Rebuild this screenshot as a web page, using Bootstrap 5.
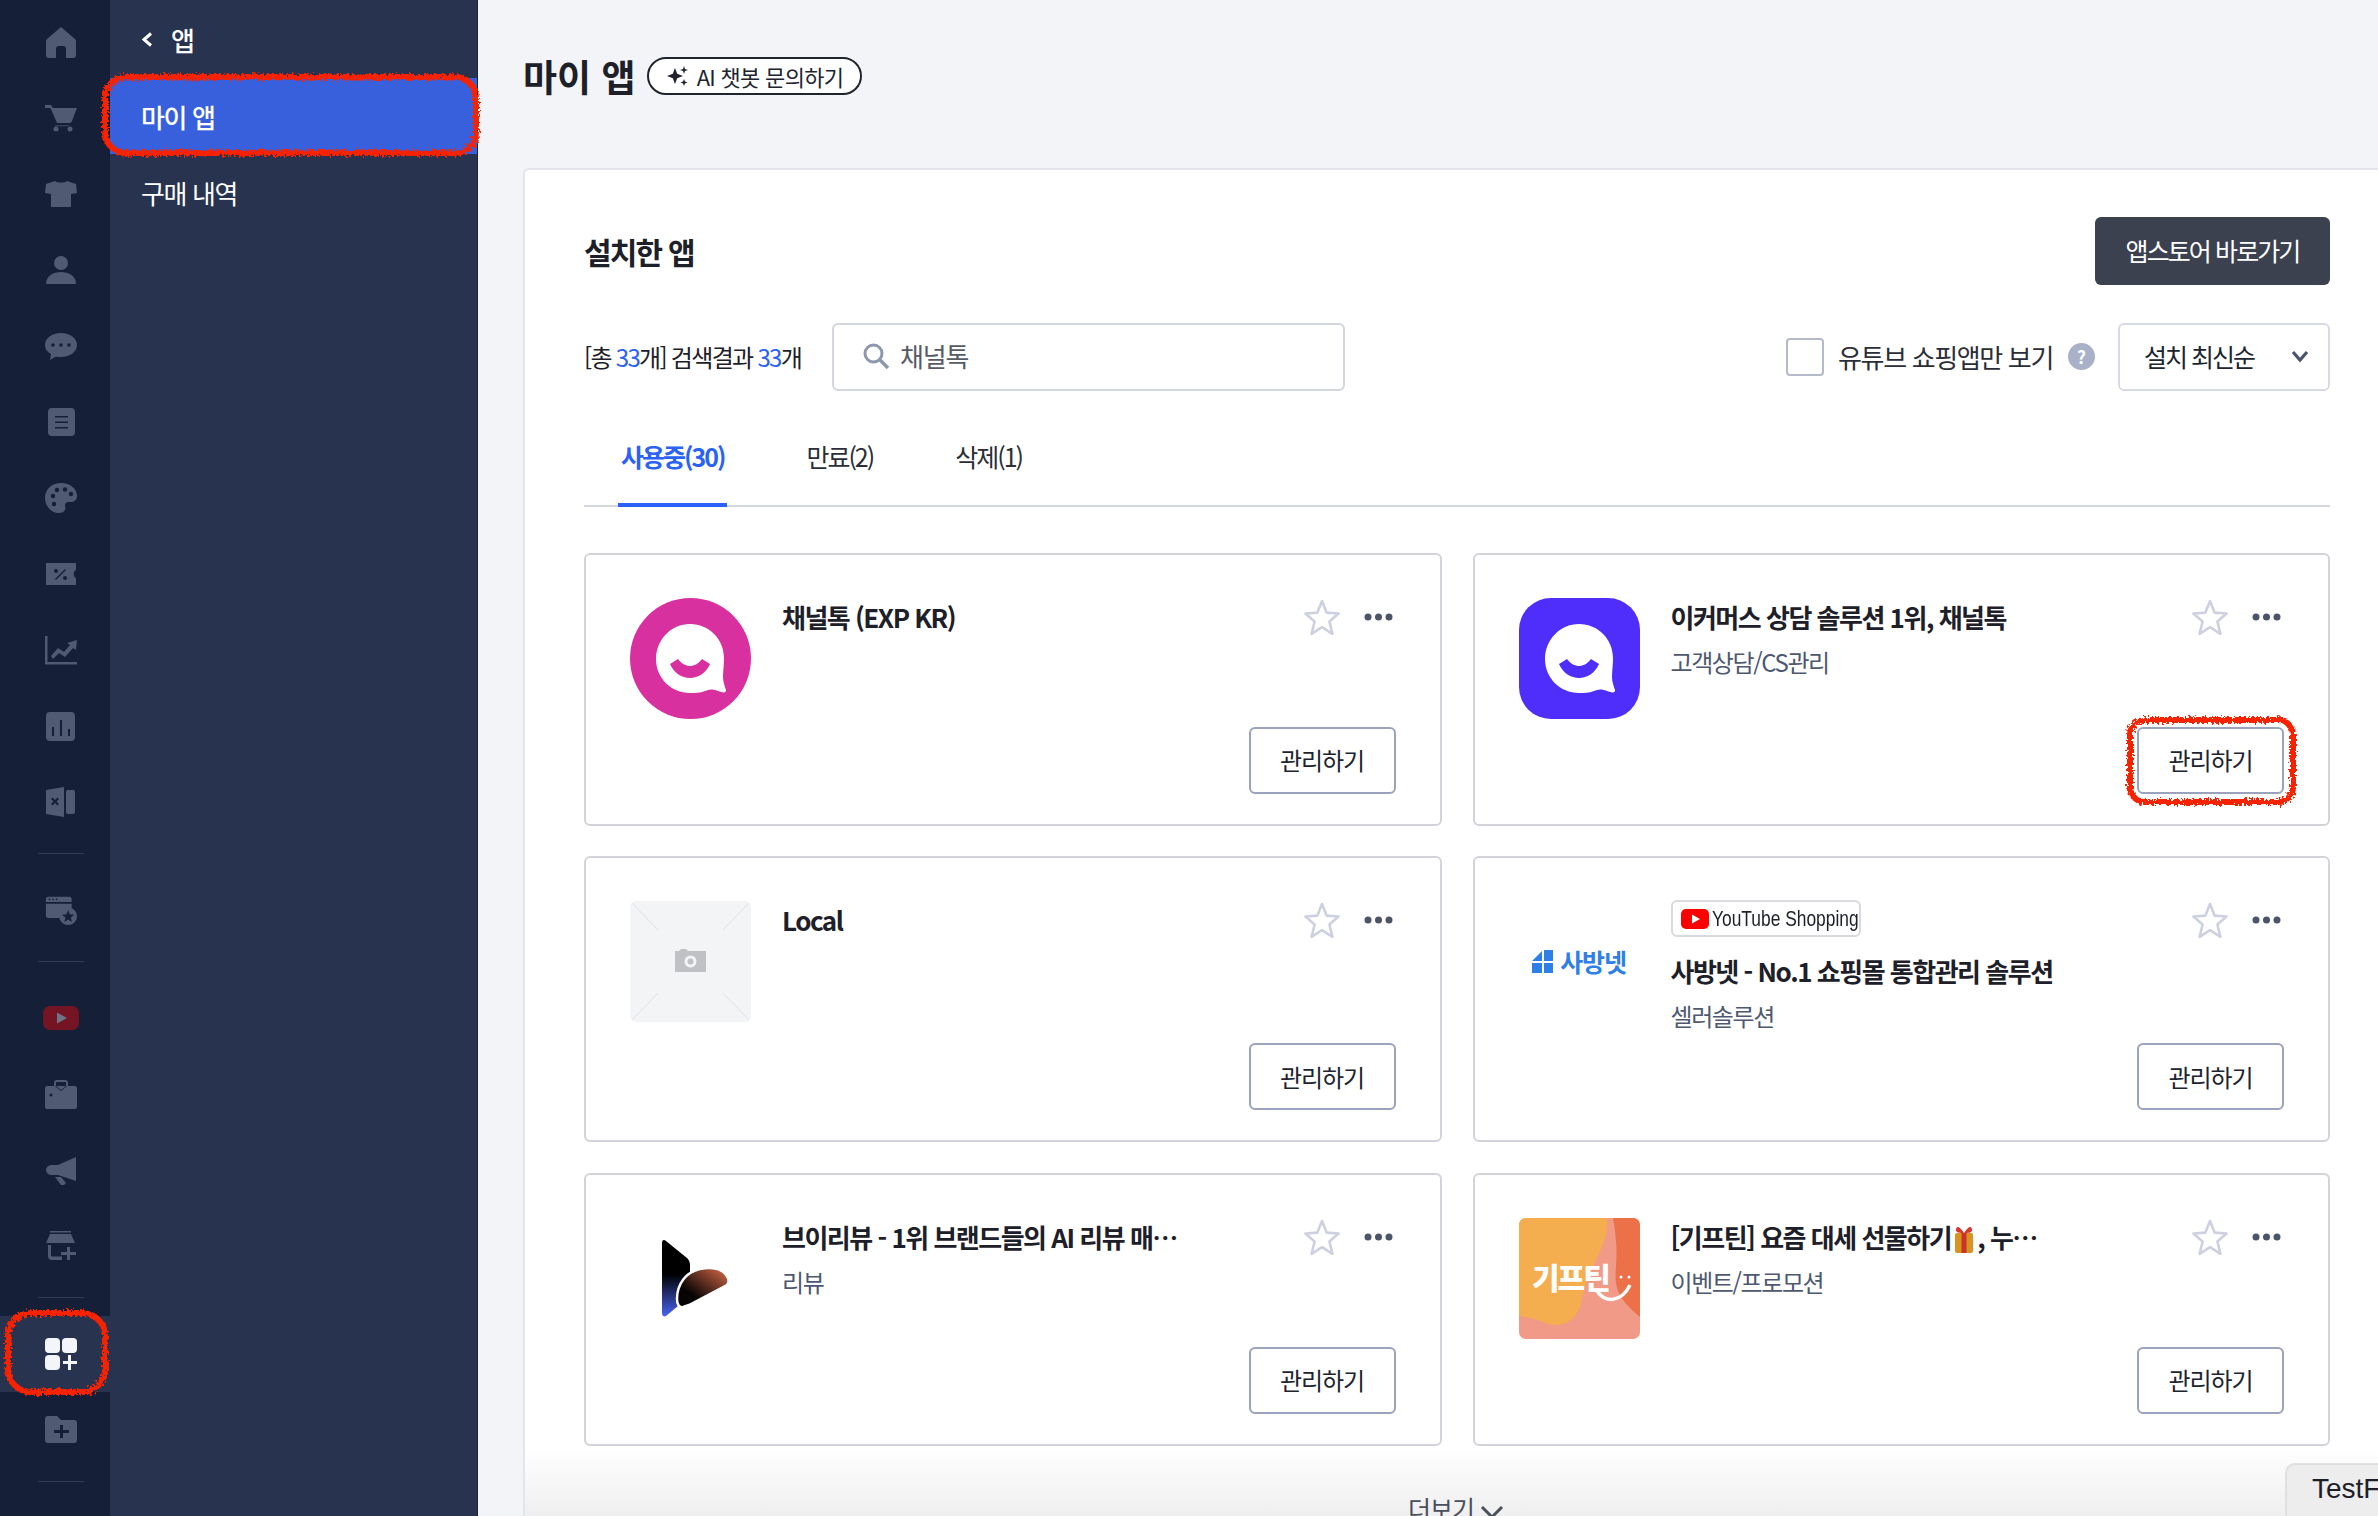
<!DOCTYPE html>
<html lang="ko">
<head>
    <meta charset="UTF-8">
    <meta name="viewport" content="width=device-width, initial-scale=1.0">
    <title>마이 앱</title>
    <link href="https://cdn.jsdelivr.net/npm/bootstrap@5.3.0/dist/css/bootstrap.min.css" rel="stylesheet">
    <style>
        html, body { height: 100%; }
        body { overflow: hidden; background: #f2f4f8; color: #1d2028; font-family: "Noto Sans CJK KR", "Noto Sans", sans-serif; }
        .page-wrap { height: 1516px; position: relative; overflow: hidden; }

        /* icon rail */
        .rail { width: 110px; flex: none; background: #161f38; padding-top: 4px; }
        .rail-item { height: 76px; display: flex; align-items: center; justify-content: center; padding-left: 11px; }
        .rail-item svg { width: 32px; height: 32px; fill: #505a72; }
        .rail-item.on { background: #283350; }
        .rail-item.on svg { fill: #f4f5f8; }
        .rail-sep { width: 46px; height: 1px; background: #323c57; margin: 13px auto 18px 38px; }

        /* sub menu */
        .subnav { width: 368px; flex: none; background: #283350; border-right: 1px solid #1a2440; }
        .subnav-head { height: 78px; padding: 0 0 0 31px; color: #fff; font-size: 26px; font-weight: 500; display: flex; align-items: center; gap: 18px; }
        .subnav-link { display: flex; align-items: center; height: 76px; padding-left: 31px; color: #fff; font-size: 26px; letter-spacing: -1.4px; text-decoration: none; }
        .subnav-link.on { background: #385fdc; font-weight: 500; }

        /* main */
        .main-area { flex: 1; min-width: 0; padding-left: 45px; }
        .page-head { height: 168px; padding-top: 54px; display: flex; align-items: flex-start; gap: 12px; }
        .page-title { font-size: 37px; font-weight: 700; line-height: 44px; margin: 0; }
        .ai-pill { height: 38px; width: 215px; margin-top: 3px; border: 2px solid #20242f; border-radius: 19px; background: #fff; display: flex; align-items: center; justify-content: center; gap: 8px; font-size: 22px; letter-spacing: -.7px; color: #20242f; }
        .ai-pill svg { width: 22px; height: 22px; fill: #20242f; }
        .panel { background: #fff; border: 2px solid #e3e5ea; border-right: 0; border-bottom: 0; border-radius: 6px 0 0 0; padding: 47px 48px 0 59px; height: 1400px; overflow: hidden; }
        .panel-title { font-size: 30px; font-weight: 700; letter-spacing: -1.8px; margin: 0; }
        .store-btn { width: 235px; height: 68px; background: #3c4150; border: 0; border-radius: 6px; color: #fff; font-size: 25px; letter-spacing: -1.9px; }
        .filter-row { margin-top: 38px; height: 68px; }
        .count-txt { font-size: 24px; letter-spacing: -1.7px; width: 248px; flex: none; }
        .count-txt b { font-weight: 400; color: #2a62f5; }
        .search-box { width: 513px; height: 68px; border: 2px solid #d3d6df; border-radius: 6px; display: flex; align-items: center; padding-left: 28px; gap: 10px; font-size: 26px; line-height: 34px; padding-bottom: 2px; letter-spacing: -1.2px; color: #565b66; }
        .search-box svg { width: 28px; height: 28px; }
        .yt-only { font-size: 26px; letter-spacing: -1.35px; color: #2b2e37; padding-bottom: 2px; }
        .yt-check.form-check-input { width: 38px; height: 38px; margin: 0 14px 0 0; border: 2px solid #b4bac9; border-radius: 4px; }
        .help-dot { width: 27px; height: 27px; border-radius: 50%; background: #a9b1c9; color: #fff; font-size: 18px; font-weight: 700; line-height: 27px; text-align: center; margin: 0 23px 2px 15px; }
        .sort-select.form-select { width: 212px; height: 68px; border: 2px solid #d8dbe3; border-radius: 6px; padding: 0 0 0 24px; font-size: 25px; letter-spacing: -2px; color: #20242f; background-image: url("data:image/svg+xml,%3csvg xmlns='http://www.w3.org/2000/svg' viewBox='0 0 20 16'%3e%3cpath fill='none' stroke='%234b5468' stroke-width='3.2' d='M3 3l7 8 7-8'/%3e%3c/svg%3e"); background-position: right 18px center; background-size: 20px 16px; }
        .tab-bar { margin-top: 45px; border-bottom: 2px solid #d4d7e0; padding-left: 34px; gap: 76px; }
        .tab-link { display: block; position: relative; padding: 0 3px 29px; line-height: 40px; font-size: 25px; letter-spacing: -2px; color: #2b2e37; text-decoration: none; }
        .tab-link.on { color: #2a62f5; font-weight: 700; }
        .tab-link.on::after { content: ""; position: absolute; left: 0; right: 0; bottom: -2px; height: 4px; background: #2a62f5; }

        /* app cards */
        .app-grid { --bs-gutter-x: 31px; --bs-gutter-y: 30.5px; margin-top: 15px; }
        .app-card { display: flex; flex-direction: column; border: 2px solid #d2d4d9; border-radius: 6px; padding: 29px 29px 30px 44px; background: #fff; height: 100%; }
        .app-top { display: flex; gap: 31px; min-height: 121px; padding-top: 14px; box-sizing: content-box; }
        .app-logo { width: 121px; height: 121px; flex: none; display: block; }
        .app-text { flex: 1; min-width: 0; margin: -1px 0 1px; }
        .app-name { font-size: 26px; font-weight: 700; line-height: 40px; letter-spacing: -1.5px; margin: 0; white-space: nowrap; }
        .app-cate { font-size: 24px; line-height: 37px; letter-spacing: -1.4px; color: #4e5871; margin: 6px 0 0; }
        .app-tools { flex: none; display: flex; align-items: center; align-self: flex-start; height: 38px; gap: 24px; padding-right: 18px; }
        .app-tools .star-ic { width: 36px; height: 38px; }
        .app-tools .dots-ic { width: 29px; height: 8px; }
        .app-foot { margin-top: auto; padding-top: 8px; text-align: right; }
        .manage-btn { width: 147px; height: 67px; border: 2px solid #9aa3bb; border-radius: 6px; background: #fff; font-size: 24px; letter-spacing: -1.1px; color: #20242f; padding: 0; margin-right: 15px; }
        .yt-tag { display: inline-flex; align-items: center; gap: 3px; height: 37px; width: 190px; border: 2px solid #d8dade; border-radius: 6px; padding-left: 8px; margin-bottom: 14px; font: 500 22px/1 "Liberation Sans", sans-serif; color: #1d2028; white-space: nowrap; vertical-align: top; }
        .yt-tag svg { flex: none; }
        .yt-tag span { display: inline-block; transform: scaleX(.79); transform-origin: left center; }
        .sabang-logo { display: flex; align-items: center; justify-content: center; gap: 6px; height: 121px; width: 121px; flex: none; color: #2f7fe8; font-size: 25px; font-weight: 700; letter-spacing: -1.2px; }
        .gift-ic { width: 26px; height: 30px; vertical-align: -5px; }

        .more-strip { margin: 0 -48px 0 -59px; height: 300px; padding: 44px 0 0 9px; text-align: center; font-size: 25px; letter-spacing: -1px; color: #4a4f5b; background: linear-gradient(#fff, #efefef 70px); }
        .more-strip svg { width: 24px; height: 15px; margin-left: 6px; vertical-align: -1px; }

        /* hand drawn marks on top of the shot */
        .scribble { position: absolute; border: 6px solid #f62200; filter: url(#rough); pointer-events: none; }
        .scribble-menu { left: 102px; top: 74px; width: 377px; height: 82px; border-radius: 24px; }
        .scribble-rail { left: 5px; top: 1310px; width: 103px; height: 85px; border-radius: 26px; }
        .scribble-btn { left: 2127px; top: 717px; width: 169px; height: 88px; border-radius: 18px; }
        .flight-tab { position: absolute; left: 2285px; top: 1463px; width: 100px; height: 60px; background: #ededed; border: 2px solid #e0e0e0; border-radius: 10px 0 0 0; padding: 8px 0 0 25px; font: 28px "Liberation Sans", sans-serif; color: #1d2028; overflow: hidden; white-space: nowrap; }
    </style>
</head>
<body>
    <svg width="0" height="0" class="position-absolute">
        <defs>
            <filter id="rough" x="-5%" y="-5%" width="110%" height="110%">
                <feTurbulence type="fractalNoise" baseFrequency="0.4" numOctaves="2" seed="4"/>
                <feDisplacementMap in="SourceGraphic" scale="8"/>
            </filter>
            <linearGradient id="vrStem" x1="0" y1="0" x2="0" y2="1">
                <stop offset=".45" stop-color="#000"/><stop offset="1" stop-color="#4a63f2"/>
            </linearGradient>
            <linearGradient id="vrLeaf" x1="0" y1="1" x2="1" y2="0">
                <stop offset=".3" stop-color="#070404"/><stop offset="1" stop-color="#de6d4b"/>
            </linearGradient>
            <symbol id="star" viewBox="0 0 36 38">
                <path d="M18 3l4.6 11.6 12 .9-9.2 8 3 12.300L18 29.200 7.600 35.800l3-12.300-9.200-8 12-.9z" fill="none" stroke="#cdd1df" stroke-width="2.600" stroke-linejoin="round"/>
            </symbol>
            <symbol id="dots" viewBox="0 0 29 8">
                <circle cx="4" cy="4" r="3.500" fill="#4b5468"/><circle cx="14.500" cy="4" r="3.500" fill="#4b5468"/><circle cx="25" cy="4" r="3.500" fill="#4b5468"/>
            </symbol>
            <symbol id="chatLogo" viewBox="0 0 121 121">
                <path d="M60 26c19 0 34 15 34 34 0 7-1 13-1 19 0 5 2 10 3 13 .5 3-3 3-8 1-5-2-9-2-13 0-5 2-10 2-15 2-19 0-34-15-34-34s15-35 34-35z" fill="#fff"/>
                <path d="M40 66l8-5c4 5 8 7 12 7s8-2 12-7l8 5c-4 9-12 14-20 14s-16-5-20-14z" fill="currentColor"/>
            </symbol>
        </defs>
    </svg>

    <div class="page-wrap d-flex">
        <div class="rail">
            <div class="rail-item"><svg viewBox="0 0 32 32"><path d="M16 1l14 12c1 1 1 2 1 3v13c0 2-1 3-3 3h-7v-9c0-2-1-3-3-3h-4c-2 0-3 1-3 3v9H4c-2 0-3-1-3-3V16c0-1 0-2 1-3z"/></svg></div>
            <div class="rail-item"><svg viewBox="0 0 32 32"><path d="M0 3h6l2 3h24l-5 13c-.5 1.500-1.500 2-3 2H12L5.500 6H0z"/><rect x="10" y="23" width="14" height="1.500" opacity=".5"/><circle cx="11" cy="27" r="2.500"/><circle cx="25" cy="27" r="2.500"/></svg></div>
            <div class="rail-item"><svg viewBox="0 0 32 32"><path d="M10 3c2 2 10 2 12 0l9 3 1 9-6 1v13H6V16l-6-1 1-9z"/></svg></div>
            <div class="rail-item"><svg viewBox="0 0 32 32"><circle cx="16" cy="9" r="7"/><path d="M1 30c0-8 7-12 15-12s15 4 15 12z"/></svg></div>
            <div class="rail-item"><svg viewBox="0 0 32 32"><path d="M16 3c9 0 16 5 16 12s-7 12-16 12c-2 0-4 0-5-.5L5 30l1-6c-4-2-6-5-6-9C0 8 7 3 16 3z"/><circle cx="8" cy="15" r="1.800" fill="#161f38"/><circle cx="16" cy="15" r="1.800" fill="#161f38"/><circle cx="24" cy="15" r="1.800" fill="#161f38"/></svg></div>
            <div class="rail-item"><svg viewBox="0 0 32 32"><rect x="3" y="2" width="27" height="28" rx="4"/><path d="M10 10h13v1.500H10zM10 15.500h13V17H10zM10 21h13v1.500H10z" fill="#161f38"/></svg></div>
            <div class="rail-item"><svg viewBox="0 0 32 32"><path d="M15 1c9-.5 17 5 17 13 0 4-3 6-7 6-3 0-5 .5-5 3 0 2 1 3 0 5-1 2-3 3-6 3C6 31 0 24 0 16S6 1.500 15 1z"/><circle cx="8" cy="14" r="2.200" fill="#161f38"/><circle cx="12" cy="8" r="2.200" fill="#161f38"/><circle cx="20" cy="7.500" r="2.200" fill="#161f38"/><circle cx="26" cy="12" r="2.200" fill="#161f38"/><circle cx="9" cy="22" r="2.200" fill="#161f38"/></svg></div>
            <div class="rail-item"><svg viewBox="0 0 32 32"><path d="M1 5h30v7c-3 1-3 7 0 8v7H1z"/><path d="M10 21l10-10 1 1-10 10z" fill="#161f38"/><circle cx="11" cy="13" r="2" fill="#161f38"/><circle cx="20" cy="20" r="2" fill="#161f38"/></svg></div>
            <div class="rail-item"><svg viewBox="0 0 32 32"><path d="M0 2h2.500v26H32v2.500H0zM6 22l7-8 6 4 6-7-3-2 10-3-1 10-3-2-8 9-6-4-6 6z"/></svg></div>
            <div class="rail-item"><svg viewBox="0 0 32 32"><rect x="1" y="2" width="29" height="29" rx="4"/><path d="M7 17h2v9H7zM15 10h2v16h-2zM23 19h2v7h-2z" fill="#161f38"/></svg></div>
            <div class="rail-item"><svg viewBox="0 0 32 32"><path d="M1 4l18-3v30L1 28z"/><rect x="21" y="4" width="9" height="24" rx="2"/><path d="M6 11l1.500-1.500L10 12l2.500-2.500L14 11l-2.500 2.500L14 16l-1.500 1.500L10 15l-2.500 2.500L6 16l2.500-2.500z" transform="translate(0 2)" fill="#161f38"/></svg></div>
            <div class="rail-sep"></div>
            <div class="rail-item"><svg viewBox="0 0 36 36"><path d="M1 6c0-2 1-3 3-3h23c2 0 3 1 3 3v3H1zM1 11h29v5c-7 0-12 4-13 11H4c-2 0-3-1-3-3z"/><circle cx="26" cy="25" r="10"/><path d="M26 18l2 5 5 .3-4 3.200 1.300 5L26 28.800l-4.300 2.700 1.300-5-4-3.200 5-.3z" fill="#161f38"/><circle cx="5" cy="6" r="1" fill="#161f38"/><circle cx="9" cy="6" r="1" fill="#161f38"/><circle cx="13" cy="6" r="1" fill="#161f38"/></svg></div>
            <div class="rail-sep"></div>
            <div class="rail-item"><svg viewBox="0 0 32 32" style="overflow:visible"><rect x="-2" y="4" width="36" height="24" rx="7" fill="#751423"/><path d="M12 10.500L22 16l-10 5.500z" fill="#6d7488"/></svg></div>
            <div class="rail-item"><svg viewBox="0 0 32 32"><path d="M9 8V5c0-2 1-3 3-3h8c2 0 3 1 3 3v3h-2V5c0-.7-.3-1-1-1h-8c-.7 0-1 .3-1 1v3z"/><path d="M2 8h8l6 5 6-5h8c1 0 2 1 2 2v19c0 1-1 2-2 2H2c-1 0-2-1-2-2V10c0-1 1-2 2-2z"/><path d="M11 8h10l-5 4z"/><circle cx="6" cy="17" r="1.500" fill="#161f38"/></svg></div>
            <div class="rail-item"><svg viewBox="0 0 32 32"><path d="M31 3v24L13 21H7c-3 0-6-2-6-5s3-5 6-5h6z"/><path d="M10 23h6l5 6-2 2h-3z"/></svg></div>
            <div class="rail-item"><svg viewBox="0 0 32 32"><path d="M5 1h21v1.500H5zM5 4h21l4 9H1zM3 15h3v10c0 1 .5 1.500 1.500 1.500H17V30H7c-3 0-4-2-4-4z"/><path d="M22 17h3v5h6v3h-6v5h-3v-5h-6v-3h6z"/></svg></div>
            <div class="rail-sep"></div>
            <div class="rail-item on"><svg viewBox="0 0 32 32"><rect x="0" y="0" width="15" height="15" rx="4"/><rect x="17" y="0" width="15" height="15" rx="4"/><rect x="0" y="17" width="15" height="15" rx="4"/><path d="M23 17h3v6h6v3h-6v6h-3v-6h-5v-3h5z"/></svg></div>
            <div class="rail-item"><svg viewBox="0 0 32 32"><path d="M0 5c0-2 1-3 3-3h9l4 4h13c2 0 3 1 3 3v17c0 2-1 3-3 3H3c-2 0-3-1-3-3z"/><path d="M15 11h3v5h6v3h-6v5h-3v-5H9v-3h6z" fill="#161f38"/></svg></div>
            <div class="rail-sep"></div>
        </div>

        <div class="subnav">
            <div class="subnav-head">
                <svg width="12" height="15" viewBox="0 0 12 15"><path d="M10 1.500L3 7.500l7 6" fill="none" stroke="#fff" stroke-width="3"/></svg>
                <span>앱</span>
            </div>
            <a class="subnav-link on" href="#">마이 앱</a>
            <a class="subnav-link" href="#">구매 내역</a>
        </div>

        <div class="main-area">
            <div class="page-head">
                <h1 class="page-title">마이 앱</h1>
                <div class="ai-pill">
                    <svg viewBox="0 0 22 22"><path d="M8 3l2.200 5.800L16 11l-5.800 2.200L8 19l-2.200-5.800L0 11l5.800-2.200zM17 1l1 3 3 1-3 1-1 3-1-3-3-1 3-1zM17 14l1 2.500 2.500 1-2.500 1-1 2.500-1-2.500-2.500-1 2.500-1z"/></svg>
                    <span>AI 챗봇 문의하기</span>
                </div>
            </div>

            <div class="panel">
                <div class="d-flex justify-content-between align-items-center">
                    <h2 class="panel-title">설치한 앱</h2>
                    <button class="store-btn" type="button">앱스토어 바로가기</button>
                </div>

                <div class="filter-row d-flex align-items-center">
                    <div class="count-txt">[총 <b>33</b>개] 검색결과 <b>33</b>개</div>
                    <div class="search-box">
                        <svg viewBox="0 0 28 28"><circle cx="11.500" cy="11.500" r="8.500" fill="none" stroke="#8e97ab" stroke-width="3"/><path d="M18 18l8 8" stroke="#8e97ab" stroke-width="3.500"/></svg>
                        <span>채널톡</span>
                    </div>
                    <div class="ms-auto d-flex align-items-center">
                        <input class="form-check-input yt-check" type="checkbox" id="ytOnly">
                        <label class="yt-only" for="ytOnly">유튜브 쇼핑앱만 보기</label>
                        <span class="help-dot">?</span>
                        <select class="form-select sort-select">
                            <option>설치 최신순</option>
                        </select>
                    </div>
                </div>

                <ul class="nav tab-bar">
                    <li><a class="tab-link on" href="#">사용중(30)</a></li>
                    <li><a class="tab-link" href="#">만료(2)</a></li>
                    <li><a class="tab-link" href="#">삭제(1)</a></li>
                </ul>

                <div class="row app-grid">
                    <div class="col-6">
                        <div class="app-card">
                            <div class="app-top">
                                <svg class="app-logo" viewBox="0 0 121 121" style="color:#d9309f"><circle cx="60.500" cy="60.500" r="60.500" fill="#d9309f"/><use href="#chatLogo"/></svg>
                                <div class="app-text"><p class="app-name">채널톡 (EXP KR)</p></div>
                                <div class="app-tools"><svg class="star-ic"><use href="#star"/></svg><svg class="dots-ic"><use href="#dots"/></svg></div>
                            </div>
                            <div class="app-foot"><button class="manage-btn" type="button">관리하기</button></div>
                        </div>
                    </div>
                    <div class="col-6">
                        <div class="app-card">
                            <div class="app-top">
                                <svg class="app-logo" viewBox="0 0 121 121" style="color:#4f2dfa"><rect width="121" height="121" rx="32" fill="#4f2dfa"/><use href="#chatLogo"/></svg>
                                <div class="app-text">
                                    <p class="app-name">이커머스 상담 솔루션 1위, 채널톡</p>
                                    <p class="app-cate">고객상담/CS관리</p>
                                </div>
                                <div class="app-tools"><svg class="star-ic"><use href="#star"/></svg><svg class="dots-ic"><use href="#dots"/></svg></div>
                            </div>
                            <div class="app-foot"><button class="manage-btn" type="button">관리하기</button></div>
                        </div>
                    </div>
                    <div class="col-6">
                        <div class="app-card">
                            <div class="app-top">
                                <svg class="app-logo" viewBox="0 0 121 121"><rect width="121" height="121" rx="6" fill="#f3f4f6"/><path d="M2 2l26 27M119 2L93 29M2 119l26-27M119 119L93 92" stroke="#dfe0e3" stroke-width="1"/><path d="M45 50h4l2-2h5l2 2h18v21H45z" fill="#c0c1c4"/><circle cx="60.500" cy="60.500" r="6" fill="#f3f4f6"/><circle cx="60.500" cy="60.500" r="3" fill="#c0c1c4"/></svg>
                                <div class="app-text"><p class="app-name">Local</p></div>
                                <div class="app-tools"><svg class="star-ic"><use href="#star"/></svg><svg class="dots-ic"><use href="#dots"/></svg></div>
                            </div>
                            <div class="app-foot"><button class="manage-btn" type="button">관리하기</button></div>
                        </div>
                    </div>
                    <div class="col-6">
                        <div class="app-card">
                            <div class="app-top">
                                <div class="sabang-logo">
                                    <svg width="22" height="23" viewBox="0 0 22 23"><path d="M0 11L10 1v10zM12 0h9v11h-9zM0 13h10v10H0zM12 13h9v10h-9z" fill="#2f7fe8"/></svg>
                                    <span>사방넷</span>
                                </div>
                                <div class="app-text">
                                    <div class="yt-tag">
                                        <svg width="28" height="20" viewBox="0 0 28 20"><rect width="28" height="20" rx="5" fill="#f00"/><path d="M11 5.500l8 4.500-8 4.500z" fill="#fff"/></svg>
                                        <span>YouTube Shopping</span>
                                    </div>
                                    <p class="app-name">사방넷 - No.1 쇼핑몰 통합관리 솔루션</p>
                                    <p class="app-cate">셀러솔루션</p>
                                </div>
                                <div class="app-tools"><svg class="star-ic"><use href="#star"/></svg><svg class="dots-ic"><use href="#dots"/></svg></div>
                            </div>
                            <div class="app-foot"><button class="manage-btn" type="button">관리하기</button></div>
                        </div>
                    </div>
                    <div class="col-6">
                        <div class="app-card">
                            <div class="app-top">
                                <svg class="app-logo" viewBox="0 0 121 121"><path d="M32 25c0-3 2-4 4-2l21 17c2 2 3 4 3 7v17c-8 8-12 17-12 24L36 98c-2 1-4 0-4-3z" fill="url(#vrStem)"/><path d="M53 89c-4 1-6-3-6-8 0-15 9-27 23-30 11-2 23-2 28 9 1 3 1 5-1 7L59 87z" fill="url(#vrLeaf)" stroke="#fff" stroke-width="2.500"/></svg>
                                <div class="app-text"><p class="app-name">브이리뷰 - 1위 브랜드들의 AI 리뷰 매…</p><p class="app-cate">리뷰</p></div>
                                <div class="app-tools"><svg class="star-ic"><use href="#star"/></svg><svg class="dots-ic"><use href="#dots"/></svg></div>
                            </div>
                            <div class="app-foot"><button class="manage-btn" type="button">관리하기</button></div>
                        </div>
                    </div>
                    <div class="col-6">
                        <div class="app-card">
                            <div class="app-top">
                                <svg class="app-logo" viewBox="0 0 121 121"><rect width="121" height="121" rx="7" fill="#f19a87"/><path d="M7 0h81c4 25-18 45-26 85-5 22-25 25-35 20-10-4-19-6-27-7V7c0-4 3-7 7-7z" fill="#f4ae50"/><path d="M88 0h26c4 0 7 3 7 7v92c-12-10-22-20-24-34-2-15 4-25-3-65z" fill="#ec7148"/><text x="13" y="71" font-family="'Noto Sans CJK KR', sans-serif" font-size="30" font-weight="900" letter-spacing="-2" fill="#fff">기프틴</text><path d="M78 73c8 12 24 12 33-6" fill="none" stroke="#fff" stroke-width="3.500"/><circle cx="102" cy="59" r="1.500" fill="#fff"/><circle cx="110" cy="59" r="1.500" fill="#fff"/></svg>
                                <div class="app-text"><p class="app-name">[기프틴] 요즘 대세 선물하기<svg class="gift-ic" viewBox="0 0 26 30"><rect x="4" y="10" width="18" height="20" rx="2" fill="#d9941f"/><rect x="10.500" y="10" width="5" height="20" fill="#c9332b"/><path d="M13 10C8 2 5 3 5 7c0 3 4 3 8 3zM13 10c5-8 8-7 8-3 0 3-4 3-8 3z" fill="#d8392f"/></svg>, 누…</p><p class="app-cate">이벤트/프로모션</p></div>
                                <div class="app-tools"><svg class="star-ic"><use href="#star"/></svg><svg class="dots-ic"><use href="#dots"/></svg></div>
                            </div>
                            <div class="app-foot"><button class="manage-btn" type="button">관리하기</button></div>
                        </div>
                    </div>
                </div>

                <div class="more-strip">더보기<svg viewBox="0 0 24 15"><path d="M2 2l10 10L22 2" fill="none" stroke="#4a4f5b" stroke-width="3"/></svg></div>
            </div>
        </div>

        <div class="scribble scribble-menu"></div>
        <div class="scribble scribble-rail"></div>
        <div class="scribble scribble-btn"></div>
        <div class="flight-tab">TestF</div>
    </div>

    <script src="https://cdn.jsdelivr.net/npm/bootstrap@5.3.0/dist/js/bootstrap.bundle.min.js"></script>
</body>
</html>
